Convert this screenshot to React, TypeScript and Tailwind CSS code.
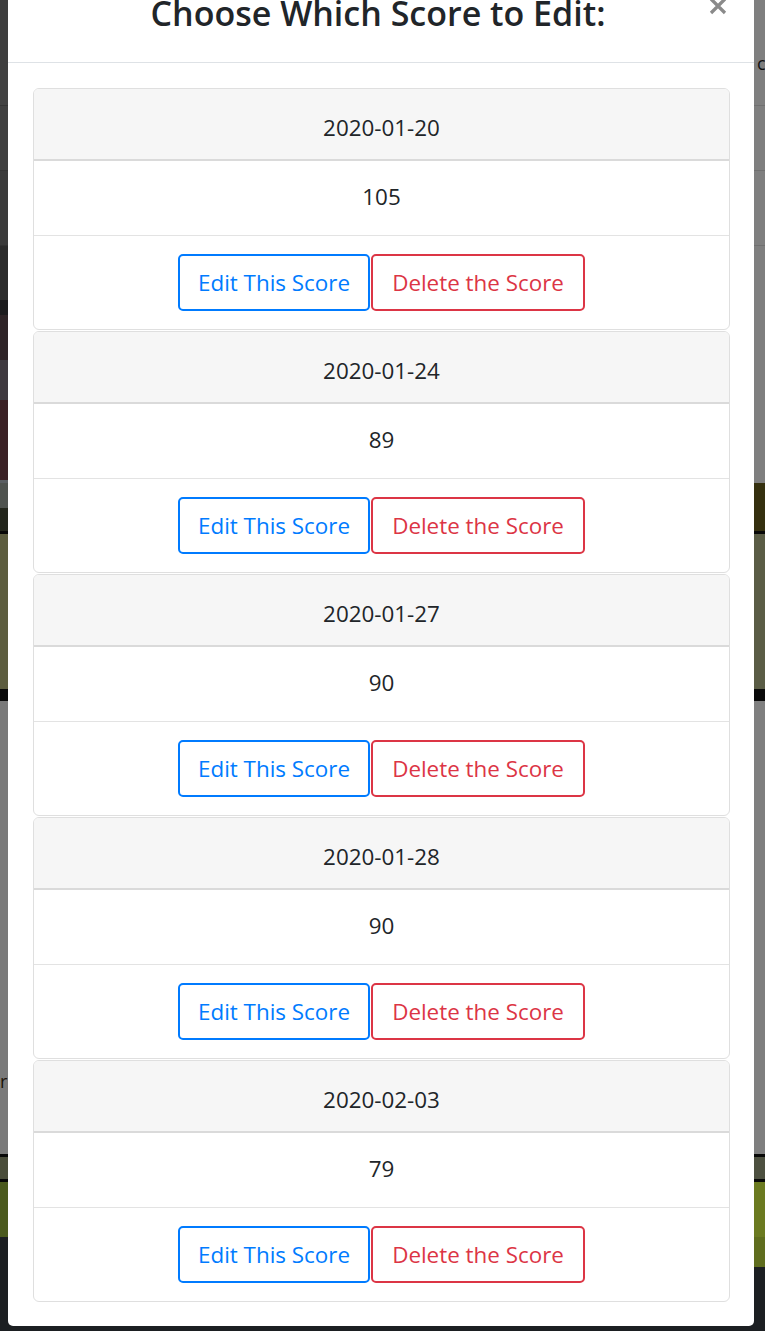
import React from "react";

type Band = { h: number; l: string; r: string; m?: string; lt?: string; rt?: string };

const bands: Band[] = [
  { h: 56, l: "#3e3e3e", r: "#7f7f7f" },
  { h: 14, l: "#3e3e3e", r: "#7f7f7f", rt: "c" },
  { h: 35, l: "#424242", r: "#7f7f7f" },
  { h: 1, l: "#353535", r: "#707070" },
  { h: 64, l: "#404040", r: "#7f7f7f" },
  { h: 1, l: "#353535", r: "#707070" },
  { h: 74, l: "#3b3b3b", r: "#7f7f7f" },
  { h: 1, l: "#333333", r: "#707070" },
  { h: 54, l: "#2c2c2c", r: "#7f7f7f" },
  { h: 15, l: "#1c1c1e", r: "#7f7f7f" },
  { h: 45, l: "#2e2427", r: "#7f7f7f" },
  { h: 40, l: "#3f3a40", r: "#7f7f7f" },
  { h: 80, l: "#3b2226", r: "#7f7f7f" },
  { h: 3, l: "#5a5e62", r: "#7f7f7f" },
  { h: 25, l: "#4f534f", r: "#35300f" },
  { h: 23, l: "#23261c", r: "#35300f" },
  { h: 3, l: "#080808", r: "#080808" },
  { h: 155, l: "#5d5d3f", r: "#5a5c45" },
  { h: 12, l: "#0a0a0a", r: "#0a0a0a" },
  { h: 370, l: "#7a7a7a", r: "#7f7f7f" },
  { h: 20, l: "#7a7a7a", r: "#7f7f7f", lt: "r" },
  { h: 63, l: "#7a7a7a", r: "#7f7f7f" },
  { h: 3, l: "#080808", r: "#080808" },
  { h: 22, l: "#4a4d3a", r: "#4d5040" },
  { h: 3, l: "#080808", r: "#080808" },
  { h: 55, l: "#4b5a1e", r: "#6b7a20" },
  { h: 30, l: "#1c1f22", r: "#5f6d1e" },
  { h: 64, l: "#1c1f22", r: "#1c1f22", m: "#1c1f22" },
];

const scores = [
  { date: "2020-01-20", score: "105" },
  { date: "2020-01-24", score: "89" },
  { date: "2020-01-27", score: "90" },
  { date: "2020-01-28", score: "90" },
  { date: "2020-02-03", score: "79" },
];

function ScoreCard({ date, score }: { date: string; score: string }) {
  return (
    <div className="border border-[#dfdfdf] rounded-[6px] bg-white overflow-hidden">
      <div className="h-[72px] bg-[#f6f6f6] border-b-2 border-[#dadada] flex items-center justify-center pt-[7px] text-[22.4px] leading-[34px] text-[#212529]">
        {date}
      </div>
      <div className="h-[75px] border-b border-[#e3e3e3] flex items-center justify-center pb-[3px] text-[22.4px] leading-[34px] text-[#212529]">
        {score}
      </div>
      <div className="h-[93px] flex items-center justify-center gap-[1px]">
        <button className="w-[192px] h-[57px] border-2 border-[#007bff] rounded-[5px] text-[#007bff] text-[22.4px] leading-[34px] flex items-center justify-center bg-white">
          Edit This Score
        </button>
        <button className="w-[214px] h-[57px] border-2 border-[#dc3545] rounded-[5px] text-[#dc3545] text-[22.4px] leading-[34px] flex items-center justify-center bg-white">
          Delete the Score
        </button>
      </div>
    </div>
  );
}

export default function App() {
  return (
    <div
      className="relative w-[765px] h-[1334px] overflow-hidden"
      style={{ fontFamily: '"Open Sans", "Noto Sans", sans-serif' }}
    >
      <div className="flex flex-col">
        {bands.map((b, i) => (
          <div key={i} className="flex" style={{ height: b.h }}>
            <div className="w-[8px] overflow-hidden text-[18px] leading-[20px] text-[#1a1208]" style={{ background: b.l }}>
              {b.lt ?? ""}
            </div>
            <div className="flex-1" style={{ background: b.m ?? "#2a2a2a" }} />
            <div className="w-[11px] overflow-hidden text-[18px] leading-[14px] text-[#111] pl-[3px]" style={{ background: b.r }}>
              {b.rt ?? ""}
            </div>
          </div>
        ))}
      </div>

      <div className="fixed inset-0 flex flex-col justify-end pl-[8px] pr-[11px] pb-[8px]">
        <div className="bg-white rounded-b-[5px] flex flex-col">
          <div className="flex items-center border-b border-[#dee2e6] pl-[25px] pr-[27px] pb-[29px] pt-[20px]">
            <h4 className="flex-1 text-center text-[34px] leading-[40px] font-semibold text-[#212529]">
              Choose Which Score to Edit:
            </h4>
            <button className="ml-[-14px] mb-[14px] w-[18px] h-[18px] flex items-center justify-center" aria-label="Close">
              <svg width="18" height="18" viewBox="0 0 18 18">
                <path d="M2 2 L16 16 M16 2 L2 16" stroke="#8a8a8a" strokeWidth="3.2" strokeLinecap="butt" />
              </svg>
            </button>
          </div>
          <div className="pl-[25px] pr-[24px] pt-[25px] pb-[24px] flex flex-col gap-[1px]">
            {scores.map((s, i) => (
              <ScoreCard key={i} date={s.date} score={s.score} />
            ))}
          </div>
        </div>
      </div>
    </div>
  );
}
